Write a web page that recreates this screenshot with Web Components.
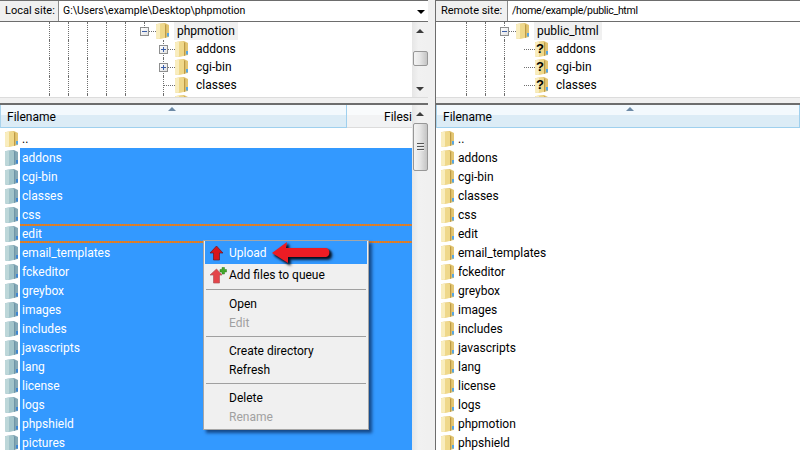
<!DOCTYPE html>
<html>
<head>
<meta charset="utf-8">
<title>FileZilla</title>
<style>
  html, body { margin: 0; height: 100%; overflow: hidden; background: #f0f0f0; }
  body { font: 12px/18px Roboto, "Noto Sans", sans-serif; color: #000; }
</style>
</head>
<body>
<fz-app></fz-app>

<script>
// small helper, every component just sets its shadow html once
class Base extends HTMLElement {
  render(html) {
    this.attachShadow({ mode: 'open' });
    this.shadowRoot.innerHTML = html;
  }
}

class FzFolder extends Base {
  connectedCallback() {
    const q = this.hasAttribute('unknown');
    const c = this.hasAttribute('selected')
      ? { back: '#86a9b6', band: '#6f96a8', leaf: '#a2c4ca', edge: '#bdd7d9', blue: '#3f86d0' }
      : { back: '#e3c673', band: '#bd9a45', leaf: '#efd88a', edge: '#f9edbe', blue: '#58a6e2' };
    this.render(`
      <style>
        :host { display: block; width: 14px; height: 16px; position: relative; flex: none; }
        svg { display: block; }
        b { position: absolute; left: 0; top: 0; width: 10px; text-align: center; font: bold 13px/16px "Liberation Sans", sans-serif; color: #000; }
      </style>
      <svg width="14" height="16" viewBox="0 0 14 16">
        <path d="M1 1 L9 0 L13 2 L13 14 L2 16 L0 15 L0 2 Z" fill="${c.back}"/>
        <path d="M0 2 L1 1 L8 .5 L9 1.5 L9 15 L2 16 L0 15 Z" fill="${c.leaf}"/>
        <path d="M0 2 L1 1 L4 .8 L4 15.6 L2 16 L0 15 Z" fill="${c.edge}"/>
        <rect x="9" y="1.5" width="1.2" height="13.3" fill="${c.band}"/>
        <rect x="11" y="10" width="2" height="3.5" fill="${c.blue}"/>
      </svg>
      ${q ? '<b>?</b>' : ''}`);
  }
}
customElements.define('fz-folder', FzFolder);

class FzSiteBar extends Base {
  connectedCallback() {
    const combo = this.hasAttribute('combo');
    const pad = this.getAttribute('label-pad') || 5;
    const spacing = this.getAttribute('spacing') || 0;
    this.render(`
      <style>
        :host { display: flex; height: 22px; flex: none; box-sizing: border-box; border-top: 1px solid #6d6d6d; border-bottom: 1px solid #6d6d6d; background: #f0f0f0; }
        .label { padding: 1px 0 0 ${pad}px; box-sizing: border-box; font-size: 11px; line-height: 18px; flex: none; white-space: nowrap; overflow: hidden; }
        .input { flex: 1; background: #fff; border-left: 1px solid #8a8a8a; padding: 1px 0 0 4px; font-size: 10.5px; letter-spacing: ${spacing}px; line-height: 18px; white-space: nowrap; overflow: hidden; position: relative; }
        .arrow { position: absolute; right: 3px; top: 9px; width: 0; height: 0; border: 4px solid transparent; border-top: 4px solid #000; border-bottom: 0; }
      </style>
      <div class="label" style="width:${this.getAttribute('label-width')}px"><slot name="label"></slot></div>
      <div class="input"><slot></slot>${combo ? '<i class="arrow"></i>' : ''}</div>`);
  }
}
customElements.define('fz-site-bar', FzSiteBar);

// vertical scrollbar, the thumb position is given in px from attributes
class FzScrollbar extends Base {
  connectedCallback() {
    const top = this.getAttribute('thumb-top');
    const h = this.getAttribute('thumb-height');
    const grip = this.hasAttribute('grip');
    const noDown = this.hasAttribute('no-down');
    this.render(`
      <style>
        :host { display: flex; flex-direction: column; width: 16px; flex: none; background: linear-gradient(90deg, #e6e6e6, #f1f1f1 40%, #f0f0f0); }
        .btn { height: 17px; flex: none; display: flex; align-items: center; justify-content: center; }
        .btn i { width: 0; height: 0; border: 4px solid transparent; border-top: 0; border-bottom: 4px solid #3c3c3c; }
        .btn.down i { border-bottom: 0; border-top: 4px solid #3c3c3c; }
        .track { flex: 1; padding-top: ${top}px; overflow: hidden; }
        .thumb { height: ${h}px; box-sizing: border-box; margin-left: 1px; width: 15px; border: 1px solid #979797; border-radius: 2px; background: linear-gradient(90deg, #f3f3f3, #e6e6e6 45%, #c4c4c4); display: flex; align-items: center; justify-content: center; }
        .grip { width: 7px; height: 8px; background: repeating-linear-gradient(180deg, #555 0 1px, #eee 1px 2px, transparent 2px 3px); }
      </style>
      <div class="btn"><i></i></div>
      <div class="track"><div class="thumb">${grip ? '<div class="grip"></div>' : ''}</div></div>
      ${noDown ? '' : '<div class="btn down"><i></i></div>'}`);
  }
}
customElements.define('fz-scrollbar', FzScrollbar);

class FzTree extends Base {
  connectedCallback() {
    this.render(`
      <style>
        :host { display: flex; height: 75px; flex: none; background: #fff; overflow: hidden; }
        .rows { flex: 1; overflow: hidden; min-width: 0; }
      </style>
      <div class="rows"><slot></slot></div>
      <slot name="bar"></slot>`);
  }
}
customElements.define('fz-tree', FzTree);

// one tree line: guides = number of dotted ancestors, blank = cells without a line,
// kind = plus/minus box or leaf, first = line only above the box, flat = no line at all
class FzTreeRow extends Base {
  connectedCallback() {
    const start = +this.getAttribute('start');
    const guides = +this.getAttribute('guides');
    const blank = +(this.getAttribute('blank') || 0);
    const kind = this.getAttribute('kind') || 'leaf';
    const mark = this.hasAttribute('current');
    const box = kind === 'plus' || kind === 'minus';
    const joinClass = this.hasAttribute('first') ? 'top' : this.hasAttribute('flat') ? 'flat' : '';
    this.render(`
      <style>
        :host { display: flex; height: 18px; align-items: stretch; padding-left: ${start}px; white-space: nowrap; }
        .g { width: 19px; box-sizing: border-box; flex: none; border-left: 1px dotted #6e6e6e; }
        .b { width: 19px; flex: none; }
        .join { width: 12px; flex: none; position: relative; box-sizing: border-box; border-left: 1px dotted #6e6e6e; }
        .join::before { content: ""; position: absolute; left: 0; width: 11px; top: 9px; border-top: 1px dotted #6e6e6e; }
        .join.top, .join.flat { border-left: 1px solid transparent; }
        .join.top::after { content: ""; position: absolute; left: -1px; top: 0; height: 6px; border-left: 1px dotted #6e6e6e; }
        .box { position: absolute; left: -5px; top: 5px; width: 9px; height: 9px; box-sizing: border-box; border: 1px solid #8e8f8f; background: linear-gradient(135deg, #fff, #e2e2e2); }
        .box::before { content: ""; position: absolute; left: 1px; right: 1px; top: 3px; height: 1px; background: #3b5ea8; }
        .plus::after { content: ""; position: absolute; top: 1px; bottom: 1px; left: 3px; width: 1px; background: #3b5ea8; }
        fz-folder { margin-top: 1px; }
        .label { margin-left: 4px; padding: 0 3px; line-height: 18px; ${mark ? 'background: #f0f0f0;' : ''} }
      </style>
      ${'<span class="g"></span>'.repeat(guides)}${'<span class="b"></span>'.repeat(blank)}<span class="join ${joinClass}">${box ? `<span class="box ${kind}"></span>` : ''}</span>
      <fz-folder ${this.hasAttribute('unknown') ? 'unknown' : ''}></fz-folder>
      <span class="label"><slot></slot></span>`);
  }
}
customElements.define('fz-tree-row', FzTreeRow);

class FzSplit extends Base {
  connectedCallback() {
    this.render(`
      <style>
        :host { display: block; height: 8px; flex: none; box-sizing: border-box; background: #f0f0f0; border-top: 1px solid #dcdcdc; border-bottom: 2px solid #6d6d6d; }
      </style>`);
  }
}
customElements.define('fz-split', FzSplit);

class FzListHeader extends Base {
  connectedCallback() {
    const second = this.getAttribute('second');
    this.render(`
      <style>
        :host { display: flex; height: 23px; margin-bottom: 1px; flex: none; }
        div { box-sizing: border-box; height: 23px; border-bottom: 1px solid #9fd0ee; line-height: 24px; white-space: nowrap; overflow: hidden; position: relative; }
        .name { flex: 1; padding-left: 6px; background: linear-gradient(180deg, #f3f9fd 0 10px, #dcecf6 10px); border-right: 1px solid #9fd0ee; border-left: 1px solid #a9d3ec; }
        .name i { position: absolute; top: 2px; left: ${this.getAttribute('arrow')}px; width: 0; height: 0; border: 4px solid transparent; border-top: 0; border-bottom: 4px solid #6d8aa6; }
        .size { width: 65px; padding-left: 37px; background: linear-gradient(180deg, #f9fbfc 0 10px, #f2f3f4 10px); border-bottom-color: #dcdcdc; }
      </style>
      <div class="name"><i></i>Filename</div>
      ${second ? `<div class="size">${second}</div>` : ''}`);
  }
}
customElements.define('fz-list-header', FzListHeader);

class FzFileRow extends Base {
  connectedCallback() {
    const sel = this.hasAttribute('selected');
    const focus = this.hasAttribute('focused');
    this.render(`
      <style>
        :host { display: flex; height: 19px; flex: none; white-space: nowrap; }
        .icon { width: 20px; flex: none; padding: 2px 0 0 5px; box-sizing: border-box; background: #fff; }
        .text { flex: 1; min-width: 0; line-height: 20px; padding-left: 2px; box-sizing: border-box; position: relative; overflow: hidden; }
        .sel { background: #3399ff; color: #fff; }
        .focus::before, .focus::after { content: ""; position: absolute; left: 0; right: 0; height: 2px; background: repeating-linear-gradient(90deg, #f0820f 0 1px, #b97a55 1px 2px); }
        .focus::before { top: 0; }
        .focus::after { bottom: 0; }
      </style>
      <div class="icon"><fz-folder ${sel ? 'selected' : ''}></fz-folder></div>
      <div class="text ${sel ? 'sel' : ''} ${focus ? 'focus' : ''}"><slot></slot></div>`);
  }
}
customElements.define('fz-file-row', FzFileRow);

class FzList extends Base {
  connectedCallback() {
    this.render(`
      <style>
        :host { display: flex; flex: 1; min-height: 0; background: #fff; overflow: hidden; }
        .main { flex: 1; min-width: 0; display: flex; flex-direction: column; overflow: hidden; }
      </style>
      <div class="main"><slot></slot></div>
      <slot name="bar"></slot>`);
  }
}
customElements.define('fz-list', FzList);

class FzMenuItem extends Base {
  connectedCallback() {
    const off = this.hasAttribute('disabled');
    const on = this.hasAttribute('active');
    const h = this.getAttribute('height') || 19;
    this.render(`
      <style>
        :host { display: flex; height: ${h}px; box-sizing: border-box; align-items: center; padding: ${on ? '1px' : 0} 0 0 24px; white-space: nowrap; position: relative; ${on ? 'background:#3399ff;color:#fff;' : ''} ${off ? 'color:#a0a0a0;' : ''} }
        ::slotted(svg) { position: absolute; left: 4px; top: ${on ? 4 : 2}px; }
      </style>
      <slot></slot>`);
  }
}
customElements.define('fz-menu-item', FzMenuItem);

class FzMenuSep extends Base {
  connectedCallback() {
    this.render(`<style>:host { display: block; height: 1px; margin: 4px 1px; background: #a0a0a0; }</style>`);
  }
}
customElements.define('fz-menu-sep', FzMenuSep);

class FzMenu extends Base {
  connectedCallback() {
    this.render(`
      <style>
        :host { display: block; position: absolute; left: 203px; top: 240px; width: 166px; height: 190px; box-sizing: border-box; padding: 0 1px; background: #f0f0f0; border: 1px solid #a6a6a6; box-shadow: 3px 3px 3px rgba(0,20,60,.6); }
      </style>
      <slot></slot>`);
  }
}
customElements.define('fz-menu', FzMenu);

const LEFT_FILES = ['addons', 'cgi-bin', 'classes', 'css', 'edit', 'email_templates', 'fckeditor', 'greybox', 'images', 'includes', 'javascripts', 'lang', 'license', 'logs', 'phpshield', 'pictures'];
const RIGHT_FILES = ['addons', 'cgi-bin', 'classes', 'css', 'edit', 'email_templates', 'fckeditor', 'greybox', 'images', 'includes', 'javascripts', 'lang', 'license', 'logs', 'phpmotion', 'phpshield'];

class FzApp extends Base {
  connectedCallback() {
    const leftRows = LEFT_FILES.map(f => `<fz-file-row selected ${f === 'edit' ? 'focused' : ''}>${f}</fz-file-row>`).join('');
    const rightRows = RIGHT_FILES.map(f => `<fz-file-row>${f}</fz-file-row>`).join('');
    const upArrow = `<svg width="16" height="16" viewBox="0 0 16 16"><path d="M7.5 1 L14 8 L10.5 8 L10.5 15 L4.5 15 L4.5 8 L1 8 Z" fill="#d8141a" stroke="#5e1a2a" stroke-width=".7"/></svg>`;
    const addArrow = `<svg width="18" height="18" viewBox="0 0 18 18"><path d="M7.5 3 L13 9 L10.5 9 L10.5 17 L4.5 17 L4.5 9 L1 9 Z" fill="#e4454a" stroke="#b0565a" stroke-width=".7"/><path d="M11 3.5 H13 V1.5 H15.5 V3.5 H17.5 V6 H15.5 V8 H13 V6 H11 Z" fill="#43a82c" stroke="#2c7a1a" stroke-width=".5"/></svg>`;
    this.render(`
      <style>
        :host { display: block; position: relative; width: 800px; height: 450px; overflow: hidden; }
        .cols { display: grid; grid-template-columns: 428px 365px; column-gap: 7px; height: 100%; }
        .pane { display: flex; flex-direction: column; min-width: 0; height: 450px; overflow: hidden; }
        .pane.right { border-left: 1px solid #6d6d6d; }
        .arrow { position: absolute; left: 268px; top: 238px; filter: drop-shadow(2px 2px 1px #06101f) drop-shadow(1px 1px 1px rgba(6,16,31,.6)); }
      </style>
      <div class="cols">
        <section class="pane">
          <fz-site-bar combo label-width="58"><span slot="label">Local site:</span>G:\\Users\\example\\Desktop\\phpmotion</fz-site-bar>
          <fz-tree>
            <fz-tree-row start="49" guides="5" kind="minus" first current>phpmotion</fz-tree-row>
            <fz-tree-row start="49" guides="5" blank="1" kind="plus">addons</fz-tree-row>
            <fz-tree-row start="49" guides="5" blank="1" kind="plus">cgi-bin</fz-tree-row>
            <fz-tree-row start="49" guides="5" blank="1">classes</fz-tree-row>
            <fz-tree-row start="49" guides="5" blank="1"></fz-tree-row>
            <fz-scrollbar slot="bar" thumb-top="12" thumb-height="15"></fz-scrollbar>
          </fz-tree>
          <fz-split></fz-split>
          <fz-list>
            <fz-list-header arrow="167" second="Filesize"></fz-list-header>
            <fz-file-row>..</fz-file-row>
            ${leftRows}
            <fz-scrollbar slot="bar" grip no-down thumb-top="1" thumb-height="48"></fz-scrollbar>
          </fz-list>
        </section>
        <section class="pane right">
          <fz-site-bar label-width="71" label-pad="5" spacing="-.3"><span slot="label">Remote site:</span>/home/example/public_html</fz-site-bar>
          <fz-tree>
            <fz-tree-row start="30" guides="2" kind="minus" current>public_html</fz-tree-row>
            <fz-tree-row start="30" guides="3" flat unknown>addons</fz-tree-row>
            <fz-tree-row start="30" guides="3" flat unknown>cgi-bin</fz-tree-row>
            <fz-tree-row start="30" guides="3" flat unknown>classes</fz-tree-row>
            <fz-tree-row start="30" guides="3" flat></fz-tree-row>
          </fz-tree>
          <fz-split></fz-split>
          <fz-list>
            <fz-list-header arrow="189"></fz-list-header>
            <fz-file-row>..</fz-file-row>
            ${rightRows}
          </fz-list>
        </section>
      </div>
      <fz-menu>
        <fz-menu-item active height="23">${upArrow}Upload</fz-menu-item>
        <fz-menu-item height="21">${addArrow}Add files to queue</fz-menu-item>
        <fz-menu-sep></fz-menu-sep>
        <fz-menu-item>Open</fz-menu-item>
        <fz-menu-item disabled>Edit</fz-menu-item>
        <fz-menu-sep></fz-menu-sep>
        <fz-menu-item>Create directory</fz-menu-item>
        <fz-menu-item>Refresh</fz-menu-item>
        <fz-menu-sep></fz-menu-sep>
        <fz-menu-item>Delete</fz-menu-item>
        <fz-menu-item disabled>Rename</fz-menu-item>
      </fz-menu>
      <svg class="arrow" width="70" height="30" viewBox="0 0 70 30">
        <path d="M4 15 L19 4 L18 10 L58 10 C62.5 10 62.5 19 58 19 L20 19 L20 25 Z" fill="#ed1c24"/>
      </svg>`);
  }
}
customElements.define('fz-app', FzApp);
</script>
</body>
</html>
